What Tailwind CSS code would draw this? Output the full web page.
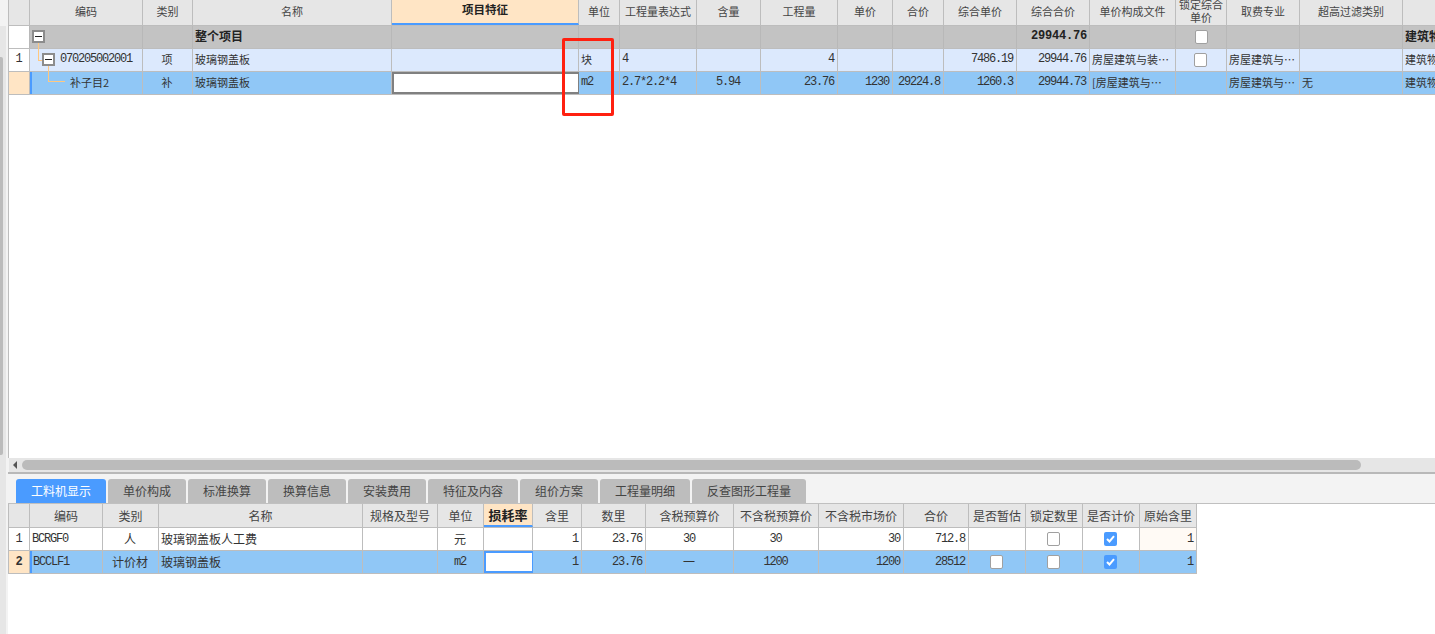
<!DOCTYPE html>
<html lang="zh-CN">
<head>
  <meta charset="UTF-8" />
  <title>工料机显示</title>
  <script src="https://cdn.jsdelivr.net/npm/@tailwindcss/browser@4"></script>
</head>
<body class="bg-white text-[#333] overflow-hidden font-['Noto_Sans_CJK_SC','Liberation_Sans',sans-serif]">
  <div class="relative w-[1435px] h-[634px] flex overflow-hidden">

    <!-- left splitter / scrollbar -->
    <div class="w-[8px] h-full flex flex-col bg-[#e6e6e6] border-r-2 border-[#f3f3f3]">
      <div class="h-[26px] bg-[#f3f3f3]"></div>
      <div class="mt-[31px] w-[3px] h-[398px] bg-[#bbbbbb] rounded-r-[2px]"></div>
    </div>

    <div class="flex-1 min-w-0 flex flex-col">
      <!-- top grid -->
      <div class="h-[458px] border-l border-[#bdbdbd] text-[11px] leading-none">
        <div class="h-[26px] grid grid-cols-[21px_113px_50px_199px_187px_41px_77px_64px_77px_55px_51px_73px_73px_86px_51px_73px_103px_33px] bg-[#e6e6e6] border-b border-[#bdbdbd] text-[#444] *:border-r *:border-[#bdbdbd] *:flex *:items-center *:justify-center *:overflow-hidden *:pb-[3px]">
          <div></div>
          <div>编码</div>
          <div>类别</div>
          <div>名称</div>
          <div class="bg-[#ffe5c5] border-b-[2px] border-b-[#4a9bff]! font-bold text-[11.5px] text-[#222]">项目特征</div>
          <div>单位</div>
          <div>工程量表达式</div>
          <div>含量</div>
          <div>工程量</div>
          <div>单价</div>
          <div>合价</div>
          <div>综合单价</div>
          <div>综合合价</div>
          <div>单价构成文件</div>
          <div class="text-center leading-[13px] pb-[4px]!">锁定综合<br />单价</div>
          <div>取费专业</div>
          <div>超高过滤类别</div>
          <div></div>
        </div>

        <div class="h-[23px] grid grid-cols-[21px_113px_50px_199px_187px_41px_77px_64px_77px_55px_51px_73px_73px_86px_51px_73px_103px_33px] bg-[#c3c3c3] border-b border-[#bdbdbd] font-bold text-[12px] text-[#222] *:border-r *:border-[#b8b8b8] *:flex *:items-center *:overflow-hidden *:px-[2px] *:pb-[2px] *:whitespace-nowrap">
          <div class="bg-white"></div>
          <div class="relative">
            <span class="absolute left-[2px] top-[4px] w-[13px] h-[13px] bg-white border-2 border-[#8c8c8c] flex items-center justify-center"><span class="w-[7px] h-px bg-[#222]"></span></span>
          </div>
          <div></div>
          <div>整个项目</div>
          <div></div><div></div><div></div><div></div><div></div><div></div><div></div><div></div>
          <div class="justify-end font-['Liberation_Mono',monospace] tracking-[-0.2px]">29944.76</div>
          <div></div>
          <div class="justify-center pb-0!"><span class="block w-[13px] h-[14px] bg-white border border-[#a0a0a0] rounded-[2px]"></span></div>
          <div></div>
          <div></div>
          <div>建筑物</div>
        </div>

        <div class="h-[23px] grid grid-cols-[21px_113px_50px_199px_187px_41px_77px_64px_77px_55px_51px_73px_73px_86px_51px_73px_103px_33px] bg-[#dce9fd] border-b border-[#bdbdbd] *:border-r *:border-[#bdbdbd] *:flex *:items-center *:overflow-hidden *:px-[2px] *:pr-[3px] *:pb-[2px] *:whitespace-nowrap">
          <div class="bg-white justify-center font-['Liberation_Mono',monospace] text-[12px] tracking-[-1.2px]">1</div>
          <div class="relative overflow-visible! pl-[30px]! font-['Liberation_Mono',monospace] text-[12px] tracking-[-1.2px]">
            <span class="absolute left-[8px] top-[-6px] w-[5px] h-[18px] border-l border-b border-[#ffc880]"></span>
            <span class="absolute left-[12px] top-[4px] w-[13px] h-[13px] bg-white border-2 border-[#8c8c8c] flex items-center justify-center"><span class="w-[7px] h-px bg-[#222]"></span></span>
            070205002001
          </div>
          <div class="justify-center">项</div>
          <div>玻璃钢盖板</div>
          <div></div>
          <div>块</div>
          <div class="font-['Liberation_Mono',monospace] text-[12px] tracking-[-1.2px]">4</div>
          <div></div>
          <div class="justify-end font-['Liberation_Mono',monospace] text-[12px] tracking-[-1.2px]">4</div>
          <div></div>
          <div></div>
          <div class="justify-end font-['Liberation_Mono',monospace] text-[12px] tracking-[-1.2px]">7486.19</div>
          <div class="justify-end font-['Liberation_Mono',monospace] text-[12px] tracking-[-1.2px]">29944.76</div>
          <div>房屋建筑与装…</div>
          <div class="justify-center pb-0!"><span class="block w-[13px] h-[14px] bg-white border border-[#a0a0a0] rounded-[2px]"></span></div>
          <div>房屋建筑与…</div>
          <div></div>
          <div>建筑物</div>
        </div>

        <div class="h-[23px] grid grid-cols-[21px_113px_50px_199px_187px_41px_77px_64px_77px_55px_51px_73px_73px_86px_51px_73px_103px_33px] bg-[#90c7f6] border-b border-[#bdbdbd] *:border-r *:border-[#bdbdbd] *:flex *:items-center *:overflow-hidden *:px-[2px] *:pr-[3px] *:pb-[2px] *:whitespace-nowrap">
          <div class="bg-[#ffe5c5]"></div>
          <div class="relative overflow-visible! pl-[38px]! border-l-2 border-l-[#4a9bff]!">
            <span class="absolute left-[16px] top-[-6px] w-[17px] h-[16px] border-l border-b border-[#ffc880]"></span>
            补子目2
          </div>
          <div class="justify-center">补</div>
          <div>玻璃钢盖板</div>
          <div class="bg-white border-2 border-[#808080]!"></div>
          <div class="font-['Liberation_Mono',monospace] text-[12px] tracking-[-1.2px]">m2</div>
          <div class="font-['Liberation_Mono',monospace] text-[12px] tracking-[-1.2px]">2.7*2.2*4</div>
          <div class="justify-center font-['Liberation_Mono',monospace] text-[12px] tracking-[-1.2px]">5.94</div>
          <div class="justify-end font-['Liberation_Mono',monospace] text-[12px] tracking-[-1.2px]">23.76</div>
          <div class="justify-end font-['Liberation_Mono',monospace] text-[12px] tracking-[-1.2px]">1230</div>
          <div class="justify-end font-['Liberation_Mono',monospace] text-[12px] tracking-[-1.2px]">29224.8</div>
          <div class="justify-end font-['Liberation_Mono',monospace] text-[12px] tracking-[-1.2px]">1260.3</div>
          <div class="justify-end font-['Liberation_Mono',monospace] text-[12px] tracking-[-1.2px]">29944.73</div>
          <div>[房屋建筑与…</div>
          <div></div>
          <div>房屋建筑与…</div>
          <div>无</div>
          <div>建筑物</div>
        </div>
      </div>

      <!-- horizontal scrollbar -->
      <div class="h-[14px] bg-[#e6e6e6] flex items-center pl-[4px] border-l border-[#f3f3f3]">
        <span class="w-0 h-0 border-y-[4px] border-y-transparent border-r-[4px] border-r-[#555]"></span>
        <span class="ml-[5px] w-[1339px] h-[10px] bg-[#bbbbbb] rounded-[5px]"></span>
      </div>
      <div class="h-[2px] bg-[#b8b8b8]"></div>

      <!-- tabs -->
      <div class="h-[30px] bg-[#f3f3f3] border-b border-[#c0c0c0] flex items-end gap-[2px] pl-[8px] text-[12px] leading-none text-[#444] *:h-[24px] *:rounded-t-[3px] *:bg-[#bdbdbd] *:flex *:items-center *:justify-center">
        <div class="w-[90px] bg-[#4a9bff]! text-white">工料机显示</div>
        <div class="w-[78px]">单价构成</div>
        <div class="w-[78px]">标准换算</div>
        <div class="w-[78px]">换算信息</div>
        <div class="w-[78px]">安装费用</div>
        <div class="w-[90px]">特征及内容</div>
        <div class="w-[78px]">组价方案</div>
        <div class="w-[90px]">工程量明细</div>
        <div class="w-[114px]">反查图形工程量</div>
      </div>

      <!-- bottom grid -->
      <div class="w-[1189px] border-l border-[#bdbdbd] text-[12px] leading-none">
        <div class="h-[24px] grid grid-cols-[21px_73px_56px_204px_75px_46px_49px_49px_64px_88px_85px_85px_65px_57px_57px_57px_57px] bg-[#e6e6e6] border-b border-[#bdbdbd] text-[#444] *:border-r *:border-[#bdbdbd] *:flex *:items-center *:justify-center *:overflow-hidden *:whitespace-nowrap">
          <div></div>
          <div>编码</div>
          <div>类别</div>
          <div>名称</div>
          <div>规格及型号</div>
          <div>单位</div>
          <div class="bg-[#ffe5c5] border-b-[2px] border-b-[#4a9bff]! font-bold text-[13px] text-[#222]">损耗率</div>
          <div>含里</div>
          <div>数里</div>
          <div>含税预算价</div>
          <div>不含税预算价</div>
          <div>不含税市场价</div>
          <div>合价</div>
          <div>是否暂估</div>
          <div>锁定数里</div>
          <div>是否计价</div>
          <div>原始含里</div>
        </div>

        <div class="h-[23px] grid grid-cols-[21px_73px_56px_204px_75px_46px_49px_49px_64px_88px_85px_85px_65px_57px_57px_57px_57px] bg-white border-b border-[#bdbdbd] *:border-r *:border-[#bdbdbd] *:flex *:items-center *:overflow-hidden *:px-[2px] *:pr-[3px] *:whitespace-nowrap">
          <div class="justify-center font-['Liberation_Mono',monospace] tracking-[-1.2px]">1</div>
          <div class="font-['Liberation_Mono',monospace] tracking-[-1.2px]">BCRGF0</div>
          <div class="justify-center">人</div>
          <div>玻璃钢盖板人工费</div>
          <div></div>
          <div class="justify-center">元</div>
          <div></div>
          <div class="justify-end font-['Liberation_Mono',monospace] tracking-[-1.2px]">1</div>
          <div class="justify-end font-['Liberation_Mono',monospace] tracking-[-1.2px]">23.76</div>
          <div class="justify-center font-['Liberation_Mono',monospace] tracking-[-1.2px]">30</div>
          <div class="justify-center font-['Liberation_Mono',monospace] tracking-[-1.2px]">30</div>
          <div class="justify-end font-['Liberation_Mono',monospace] tracking-[-1.2px]">30</div>
          <div class="justify-end font-['Liberation_Mono',monospace] tracking-[-1.2px]">712.8</div>
          <div></div>
          <div class="justify-center"><span class="block w-[13px] h-[14px] bg-white border border-[#a0a0a0] rounded-[2px]"></span></div>
          <div class="justify-center">
            <span class="w-[13px] h-[14px] bg-[#4a9bff] rounded-[2px] flex items-center justify-center">
              <svg width="9" height="8" viewBox="0 0 9 8" fill="none" stroke="white" stroke-width="2"><path d="M1 4l2.5 2.5L8 1.2" /></svg>
            </span>
          </div>
          <div class="justify-end bg-[#fffaf5] font-['Liberation_Mono',monospace] tracking-[-1.2px]">1</div>
        </div>

        <div class="h-[23px] grid grid-cols-[21px_73px_56px_204px_75px_46px_49px_49px_64px_88px_85px_85px_65px_57px_57px_57px_57px] bg-[#90c7f6] border-b border-[#bdbdbd] *:border-r *:border-[#bdbdbd] *:flex *:items-center *:overflow-hidden *:px-[2px] *:pr-[3px] *:whitespace-nowrap">
          <div class="justify-center bg-[#ffe5c5] font-['Liberation_Mono',monospace] font-bold tracking-[-1.2px]">2</div>
          <div class="border-l-2 border-l-[#4a9bff]! pl-[1px]! font-['Liberation_Mono',monospace] tracking-[-1.2px]">BCCLF1</div>
          <div class="justify-center">计价材</div>
          <div>玻璃钢盖板</div>
          <div></div>
          <div class="justify-center font-['Liberation_Mono',monospace] tracking-[-1.2px]">m2</div>
          <div class="bg-white border-2 border-[#4a9bff]!"></div>
          <div class="justify-end font-['Liberation_Mono',monospace] tracking-[-1.2px]">1</div>
          <div class="justify-end font-['Liberation_Mono',monospace] tracking-[-1.2px]">23.76</div>
          <div class="justify-center">一</div>
          <div class="justify-center font-['Liberation_Mono',monospace] tracking-[-1.2px]">1200</div>
          <div class="justify-end font-['Liberation_Mono',monospace] tracking-[-1.2px]">1200</div>
          <div class="justify-end font-['Liberation_Mono',monospace] tracking-[-1.2px]">28512</div>
          <div class="justify-center"><span class="block w-[13px] h-[14px] bg-white border border-[#a0a0a0] rounded-[2px]"></span></div>
          <div class="justify-center"><span class="block w-[13px] h-[14px] bg-white border border-[#a0a0a0] rounded-[2px]"></span></div>
          <div class="justify-center">
            <span class="w-[13px] h-[14px] bg-[#4a9bff] rounded-[2px] flex items-center justify-center">
              <svg width="9" height="8" viewBox="0 0 9 8" fill="none" stroke="white" stroke-width="2"><path d="M1 4l2.5 2.5L8 1.2" /></svg>
            </span>
          </div>
          <div class="justify-end font-['Liberation_Mono',monospace] tracking-[-1.2px]">1</div>
        </div>
      </div>
    </div>

    <!-- red annotation drawn over the screenshot -->
    <div class="absolute left-[562px] top-[38px] w-[52px] h-[78px] border-[3px] border-[#ff2010] rounded-[2px]"></div>
  </div>
</body>
</html>
